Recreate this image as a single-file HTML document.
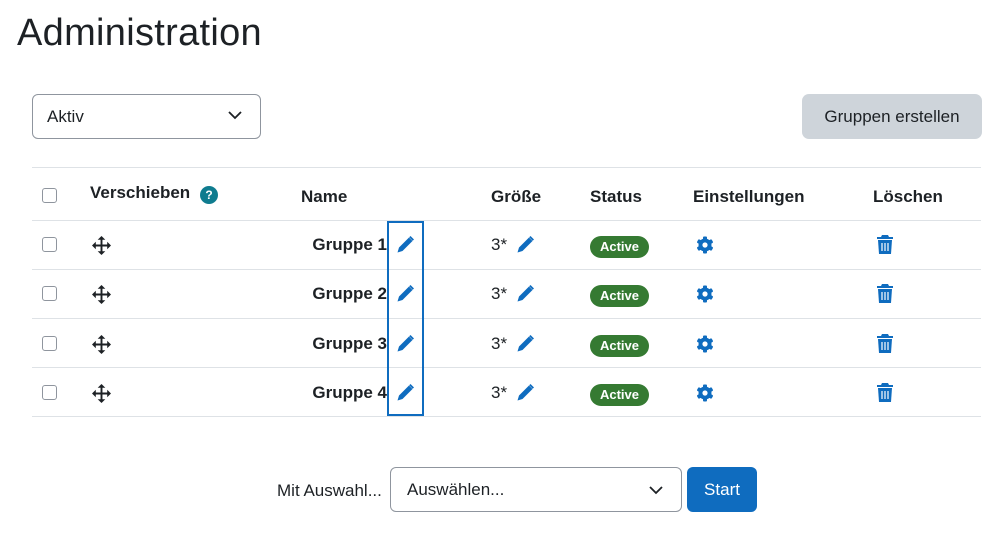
<!DOCTYPE html>
<html><head><meta charset="utf-8"><style>
body{margin:0;width:1007px;height:546px;background:#fff;font-family:"Liberation Sans",sans-serif;color:#1d2125;position:relative;overflow:hidden}
.a{position:absolute}
h1{position:absolute;left:17px;top:12px;margin:0;font-weight:400;font-size:38px;letter-spacing:0.3px}
.sel{border:1px solid #8f959e;border-radius:6px;box-sizing:border-box;font-size:17px}
.line{position:absolute;left:32px;width:949px;height:1px;background:#dee2e6}
.cb{position:absolute;left:42px;width:15px;height:15px;border:1px solid #8f959e;border-radius:3px;box-sizing:border-box}
.th{position:absolute;font-weight:700;font-size:17px}
.td{position:absolute;font-size:17px}
.badge{position:absolute;left:590px;width:59px;height:22px;background:#357a32;color:#fff;border-radius:11px;font-weight:700;font-size:13px;text-align:center;line-height:22px}
</style></head><body>
<h1>Administration</h1>
<div class="a sel" style="left:32px;top:94px;width:229px;height:45px;padding:12px 14px">Aktiv</div>
<svg class="a" style="left:228px;top:110px" width="14" height="10" viewBox="0 0 14 10"><path d="M1 2l6 6 6-6" stroke="#1d2125" stroke-width="1.8" fill="none"/></svg>
<div class="a" style="left:802px;top:94px;width:180px;height:45px;background:#ced4da;border-radius:7px;font-size:17px;text-align:center;line-height:45px">Gruppen erstellen</div>

<div class="line" style="top:167px"></div>
<div class="line" style="top:220px"></div>
<div class="line" style="top:269px"></div>
<div class="line" style="top:318px"></div>
<div class="line" style="top:367px"></div>
<div class="line" style="top:416px"></div>

<div class="cb" style="top:188px"></div>
<div class="th" style="left:90px;top:183px">Verschieben</div>
<div class="a" style="left:200px;top:186px;width:18px;height:18px;border-radius:50%;background:#0f7c8f;color:#fff;font-size:12px;font-weight:700;text-align:center;line-height:18px">?</div>
<div class="th" style="left:301px;top:187px">Name</div>
<div class="th" style="left:491px;top:187px">Größe</div>
<div class="th" style="left:590px;top:187px">Status</div>
<div class="th" style="left:693px;top:187px">Einstellungen</div>
<div class="th" style="left:873px;top:187px">Löschen</div>

<div class="a" style="left:387px;top:221px;width:33px;height:191px;border:2px solid #0f6cbf"></div>

<div id="rows"></div>
<script>
var ys=[245,294,344,393],h='';
ys.forEach(function(y,i){
h+='<div class="cb" style="top:'+(y-8)+'px"></div>';
h+='<svg class="a" style="left:92px;top:'+(y-9)+'px" width="19" height="19" viewBox="0 0 20 20"><path d="M10 0l4 4h-3v5h5V6l4 4-4 4v-3h-5v5h3l-4 4-4-4h3v-5H4v3L0 10l4-4v3h5V4H6z" fill="#1d2125"/></svg>';
h+='<div class="td" style="left:260px;width:127px;text-align:right;top:'+(y-10)+'px;font-weight:700">Gruppe '+(i+1)+'</div>';
var pen='<path d="M13 1.5l3.5 3.5-10 10L1.5 16.5l1.5-5z" fill="#0f6cbf"/><path d="M14.5 0l3.5 3.5-1.3 1.3-3.5-3.5z" fill="#0f6cbf"/>';
h+='<svg class="a" style="left:396px;top:'+(y-9)+'px" width="18" height="18" viewBox="0 0 18 18">'+pen+'</svg>';
h+='<div class="td" style="left:491px;top:'+(y-10)+'px">3*</div>';
h+='<svg class="a" style="left:516px;top:'+(y-9)+'px" width="18" height="18" viewBox="0 0 18 18">'+pen+'</svg>';
h+='<div class="badge" style="top:'+(y-9)+'px">Active</div>';
h+='<svg class="a" style="left:696px;top:'+(y-9)+'px" width="18" height="18" viewBox="0 0 18 18"><g fill="#0f6cbf"><circle cx="9" cy="9" r="6.5"/><rect x="7" y="0.5" width="4" height="17" rx="1"/><rect x="7" y="0.5" width="4" height="17" rx="1" transform="rotate(60 9 9)"/><rect x="7" y="0.5" width="4" height="17" rx="1" transform="rotate(120 9 9)"/></g><circle cx="9" cy="9" r="2.6" fill="#fff"/></svg>';
h+='<svg class="a" style="left:877px;top:'+(y-10)+'px" width="16" height="19" viewBox="0 0 16 19"><path d="M5 0h6l1 2h4v2H0V2h4z" fill="#0f6cbf"/><path d="M1 5h14l-1 14H2z" fill="#0f6cbf"/><path d="M5 8v8M8 8v8M11 8v8" stroke="#fff" stroke-width="1.2"/></svg>';
});
document.getElementById('rows').innerHTML=h;
</script>

<div class="td" style="left:277px;top:481px">Mit Auswahl...</div>
<div class="a sel" style="left:390px;top:467px;width:292px;height:45px;padding:12px 16px">Auswählen...</div>
<svg class="a" style="left:649px;top:485px" width="14" height="10" viewBox="0 0 14 10"><path d="M1 2l6 6 6-6" stroke="#1d2125" stroke-width="1.8" fill="none"/></svg>
<div class="a" style="left:687px;top:467px;width:70px;height:45px;background:#0f6cbf;color:#fff;border-radius:6px;font-size:17px;text-align:center;line-height:45px">Start</div>
</body></html>
